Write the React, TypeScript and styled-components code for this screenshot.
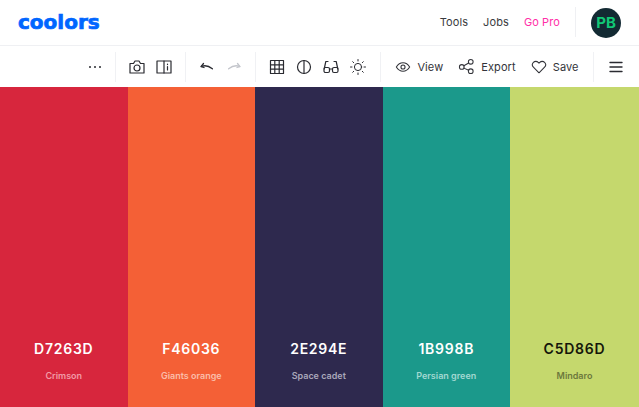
import React from "react";
import styled, { createGlobalStyle } from "styled-components";

const Global = createGlobalStyle`
  html, body { margin: 0; padding: 0; height: 100%; background: #fff; }
  #root { height: 100%; }
  * { box-sizing: border-box; }
  body { font-family: Inter, "Liberation Sans", sans-serif; overflow: hidden; }
`;

const Page = styled.div`
  width: 639px;
  height: 407px;
  display: flex;
  flex-direction: column;
`;

const Header = styled.header`
  height: 46px;
  flex: none;
  display: flex;
  align-items: center;
  justify-content: space-between;
  padding: 0 18px;
  border-bottom: 1px solid #eff0f3;
`;

const Logo = styled.div`
  font-family: "DejaVu Sans", sans-serif;
  font-weight: 700;
  font-size: 20px;
  line-height: 22px;
  letter-spacing: 0;
  color: #0066ff;
  -webkit-text-stroke: 0.7px #0066ff;
  margin-top: -1px;
`;

const Nav = styled.nav`
  display: flex;
  align-items: center;
  height: 100%;
`;

const NavLink = styled.span<{ $pro?: boolean }>`
  font-size: 11px;
  font-weight: 400;
  line-height: 16px;
  letter-spacing: 0.1px;
  margin-right: 15px;
  margin-top: -2px;
  color: ${(p) => (p.$pro ? "#ff2fa8" : "#3a3b40")};
`;

const NavRule = styled.span`
  width: 1px;
  height: 30px;
  background: #eff0f3;
  margin-right: 15px;
  margin-top: -2px;
`;

const Avatar = styled.div`
  width: 30px;
  height: 30px;
  border-radius: 50%;
  background: #132a33;
  color: #11c876;
  display: flex;
  align-items: center;
  justify-content: center;
  font-size: 15px;
  font-weight: 700;
`;

const Toolbar = styled.div`
  height: 41px;
  flex: none;
  display: flex;
  align-items: center;
  justify-content: flex-end;
`;

const ToolGroup = styled.div<{ $w: number; $gap?: number; $end?: number }>`
  height: 30px;
  width: ${(p) => p.$w}px;
  display: flex;
  align-items: center;
  justify-content: center;
  gap: ${(p) => p.$gap ?? 7}px;
  padding-right: ${(p) => p.$end ?? 0}px;
  border-right: 1px solid #f0f1f4;
  &:last-child { border-right: 0; }
`;

const IconBtn = styled.span<{ $faded?: boolean }>`
  width: 20px;
  height: 20px;
  display: flex;
  align-items: center;
  justify-content: center;
  color: ${(p) => (p.$faded ? "#c3c5cb" : "#2a2b31")};
`;

const LabelBtn = styled.span<{ $gap: number }>`
  display: flex;
  align-items: center;
  gap: ${(p) => p.$gap}px;
  font-size: 11px;
  font-weight: 400;
  letter-spacing: 0.1px;
  color: #33343a;
`;

const Palette = styled.main`
  flex: 1;
  display: grid;
  grid-template-columns: repeat(4, 127.5px) 1fr;
`;

const Swatch = styled.section<{ $bg: string; $fg: string; $sub: string }>`
  background: ${(p) => p.$bg};
  color: ${(p) => p.$fg};
  display: flex;
  flex-direction: column;
  align-items: center;
  justify-content: flex-end;
  padding-bottom: 26px;
  small { color: ${(p) => p.$sub}; }
`;

const Hex = styled.div`
  font-size: 14px;
  font-weight: 600;
  line-height: 18px;
  letter-spacing: 0.75px;
`;

const Name = styled.small`
  margin-top: 13px;
  font-size: 9px;
  font-weight: 600;
  line-height: 10px;
`;

const Svg = ({ w = 18, h = 18, sw = 1.2, vb = "0 0 18 18", children }: { w?: number; h?: number; sw?: number; vb?: string; children: React.ReactNode }) => (
  <svg width={w} height={h} viewBox={vb} fill="none" stroke="currentColor" strokeWidth={sw} strokeLinecap="round" strokeLinejoin="round">
    {children}
  </svg>
);

const swatches = [
  { bg: "#d7263d", fg: "#fff", sub: "#f29aa6", hex: "D7263D", name: "Crimson" },
  { bg: "#f46036", fg: "#fff", sub: "#fbbda9", hex: "F46036", name: "Giants orange" },
  { bg: "#2e294e", fg: "#fff", sub: "#a9a7ba", hex: "2E294E", name: "Space cadet" },
  { bg: "#1b998b", fg: "#fff", sub: "#a2d8d1", hex: "1B998B", name: "Persian green" },
  { bg: "#c5d86d", fg: "#14160a", sub: "#6d783c", hex: "C5D86D", name: "Mindaro" },
];

export default function App() {
  return (
    <Page>
      <Global />
      <Header>
        <Logo>coolors</Logo>
        <Nav>
          <NavLink>Tools</NavLink>
          <NavLink>Jobs</NavLink>
          <NavLink $pro>Go Pro</NavLink>
          <NavRule />
          <Avatar>PB</Avatar>
        </Nav>
      </Header>
      <Toolbar>
        <ToolGroup $w={42}>
          <IconBtn>
            <svg width="14" height="4" viewBox="0 0 14 4" fill="currentColor">
              <circle cx="2" cy="2" r="1" /><circle cx="7" cy="2" r="1" /><circle cx="12" cy="2" r="1" />
            </svg>
          </IconBtn>
        </ToolGroup>
        <ToolGroup $w={70}>
          <IconBtn>
            <Svg><path d="M2 5.500h3.500L7 3h4l1.500 2.500H16V15H2z" /><circle cx="9" cy="10" r="3" /></Svg>
          </IconBtn>
          <IconBtn>
            <Svg><rect x="2" y="3" width="14" height="12" /><path d="M9 3v12M12.500 6v.6M12.500 8.500v3.500" /></Svg>
          </IconBtn>
        </ToolGroup>
        <ToolGroup $w={70}>
          <IconBtn>
            <Svg sw={1.3}><path d="M5.500 5.500L3 8.600l3 .9" /><path d="M3.400 8.400c3.200-1.200 7-.8 11 2.400" /></Svg>
          </IconBtn>
          <IconBtn $faded>
            <Svg sw={1.3}><path d="M12.500 5.500L15 8.600l-3 .9" /><path d="M14.600 8.400c-3.200-1.200-7-.8-11 2.400" /></Svg>
          </IconBtn>
        </ToolGroup>
        <ToolGroup $w={125} $end={1}>
          <IconBtn>
            <Svg><rect x="2.500" y="2.500" width="13" height="13" /><path d="M2.500 6.800h13M2.500 11.200h13M6.800 2.500v13M11.200 2.500v13" /></Svg>
          </IconBtn>
          <IconBtn>
            <Svg><circle cx="9" cy="9" r="6.500" /><path d="M9 2.500v13" /></Svg>
          </IconBtn>
          <IconBtn>
            <Svg><rect x="2" y="9.500" width="5.500" height="5" rx="1.500" /><rect x="10.500" y="9.500" width="5.500" height="5" rx="1.500" /><path d="M7.500 11h3M2.200 11l1.600-7.500H6M15.800 11l-1.600-7.500H12" /></Svg>
          </IconBtn>
          <IconBtn>
            <Svg sw={1}><circle cx="9" cy="9" r="3.600" /><path d="M9 1.500v1.500M9 15v1.500M1.500 9H3M15 9h1.500M3.700 3.700l1 1M13.300 13.300l1 1M3.700 14.300l1-1M13.300 4.700l1-1" /></Svg>
          </IconBtn>
        </ToolGroup>
        <ToolGroup $w={213} $gap={15}>
          <LabelBtn $gap={6}>
            <Svg sw={1.2} w={16} h={16}><path d="M1.500 9C3.500 5.800 6 4.300 9 4.300s5.500 1.500 7.500 4.700C14.500 12.200 12 13.700 9 13.700S3.500 12.200 1.500 9z" /><circle cx="9" cy="9" r="2.300" /></Svg>
            View
          </LabelBtn>
          <LabelBtn $gap={6}>
            <Svg sw={1.1} w={17} h={17}><circle cx="4" cy="9.500" r="2.500" /><circle cx="13.500" cy="4" r="2.500" /><circle cx="13.500" cy="14" r="2.500" /><path d="M6.200 8.200L11.300 5.300M6.200 10.700l5.100 2.200" /></Svg>
            Export
          </LabelBtn>
          <LabelBtn $gap={6}>
            <Svg sw={1.2} w={16} h={16}><path d="M9 15.500L2.700 9.200a3.900 3.900 0 0 1 0-5.400 3.800 3.800 0 0 1 5.400 0L9 4.700l.9-.9a3.800 3.800 0 0 1 5.400 0 3.900 3.900 0 0 1 0 5.400z" /></Svg>
            Save
          </LabelBtn>
        </ToolGroup>
        <ToolGroup $w={45} $end={2}>
          <IconBtn>
            <Svg sw={1.4}><path d="M3 4.500h12M3 9h12M3 13.500h12" /></Svg>
          </IconBtn>
        </ToolGroup>
      </Toolbar>
      <Palette>
        {swatches.map((s) => (
          <Swatch key={s.hex} $bg={s.bg} $fg={s.fg} $sub={s.sub}>
            <Hex>{s.hex}</Hex>
            <Name>{s.name}</Name>
          </Swatch>
        ))}
      </Palette>
    </Page>
  );
}
